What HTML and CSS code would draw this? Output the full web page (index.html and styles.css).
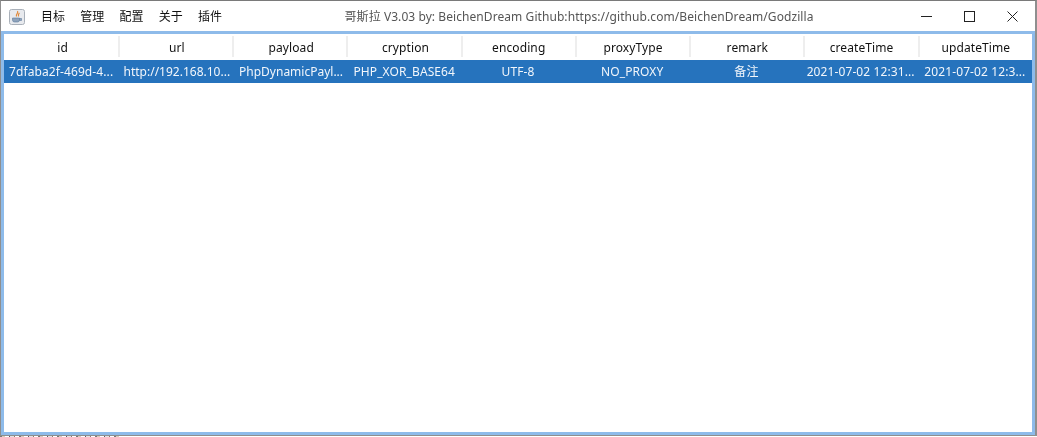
FILE: index.html
```html
<!DOCTYPE html>
<html lang="zh">
<head>
<meta charset="utf-8">
<title>哥斯拉</title>
<link rel="stylesheet" href="styles.css">
</head>
<body>
<div class="window">
  <header class="titlebar">
    <svg class="appicon" width="16" height="16" viewBox="0 0 16 16">
      <rect x="0.5" y="0.5" width="15" height="15" rx="2" fill="#e8eaee" stroke="#a9b0b9"/>
      <path d="M8.5 2C10 4 6.5 5 7.5 7.5M10.5 4C9 5 9.5 6 9.5 7.5" fill="none" stroke="#e08a3c" stroke-width="1.2"/>
      <path d="M3.5 9h7v2a2 2 0 0 1-2 2h-3a2 2 0 0 1-2-2zM10.5 9.5h2v2h-2" fill="#8fa3bb" stroke="#5d7a9c" stroke-width=".6"/>
    </svg>
    <nav class="menu">
      <span>目标</span><span>管理</span><span>配置</span><span>关于</span><span>插件</span>
    </nav>
    <div class="title">哥斯拉 V3.03 by: BeichenDream Github:https://github.com/BeichenDream/Godzilla</div>
    <div class="controls">
      <svg width="11" height="11" viewBox="0 0 11 11"><path d="M0 5.5h11" stroke="#222" fill="none"/></svg>
      <svg width="11" height="11" viewBox="0 0 11 11"><rect x=".5" y=".5" width="10" height="10" stroke="#222" fill="none"/></svg>
      <svg width="11" height="11" viewBox="0 0 11 11"><path d="M.5.5l10 10M10.5.5l-10 10" stroke="#222" fill="none"/></svg>
    </div>
  </header>
  <main class="panel">
    <div class="row head">
      <div>id</div><div>url</div><div>payload</div><div>cryption</div><div>encoding</div><div>proxyType</div><div>remark</div><div>createTime</div><div>updateTime</div>
    </div>
    <div class="row selected">
      <div>7dfaba2f-469d-4...</div><div>http://192.168.10...</div><div>PhpDynamicPayl...</div><div>PHP_XOR_BASE64</div><div>UTF-8</div><div>NO_PROXY</div><div>备注</div><div>2021-07-02 12:31...</div><div>2021-07-02 12:3...</div>
    </div>
  </main>
</div>
<div class="residue"></div>
</body>
</html>
```
FILE: styles.css
```css
* { box-sizing: border-box; }
html, body { margin: 0; height: 100%; overflow: hidden; background: #fff; }
body { font: 12px/16px "Noto Sans", "Noto Sans CJK SC", sans-serif; color: #1c1c1c; }
.window {
  width: 1037px; height: 436px;
  display: flex; flex-direction: column;
  border-top: 1px solid #7a7a7a;
  border-left: 1px solid #8f8f8f;
  border-right: 2px solid #8f8f8f;
  border-bottom: 1px solid #8f8f8f;
  filter: blur(.3px);
}
.titlebar { height: 30px; flex: none; display: flex; align-items: center; padding: 1px 0 0 8px; }
.appicon { flex: none; }
.menu { display: flex; gap: 15.25px; margin-left: 16px; width: 290px; color: #111; }
.title { width: 480px; text-align: center; color: #555; margin-left: 8px; white-space: nowrap; letter-spacing: .07px; }
.controls { margin-left: auto; display: flex; gap: 32px; padding-right: 17px; }
.panel {
  flex: 1; border: 3px solid #8ebbea;
  background: #fff; padding-top: 1px;
}
.row { display: grid; grid-template-columns: repeat(9, 1fr); text-align: center; white-space: nowrap; letter-spacing: .1px; }
.row > div { overflow: hidden; }
.head { height: 25px; color: #111; margin-left: -.5px; }
.head > div { border-left: 2px solid #eeeeee; margin: 1px 0 3px; line-height: 23px; }
.head > div:first-child { border-left-color: transparent; padding-left: 2px; }
.head > div:nth-child(2), .head > div:nth-child(3), .head > div:nth-child(4) { padding-left: 2px; }
.selected { height: 23px; line-height: 23px; background: #2673bd; color: #f2f6fb; }
.selected > div:nth-child(2) { padding-left: 3px; letter-spacing: 0; }
.selected > div:nth-child(3) { padding-left: 3px; letter-spacing: 0; }
.selected > div:nth-child(4) { padding-left: 1px; }
.residue {
  width: 120px; height: 1px;
  background: repeating-linear-gradient(90deg, #777 0 2px, #d8ccbc 2px 5px, #fff 5px 9px, #5a5a6a 9px 10px, #e4e4e4 10px 14px, #8a7a70 14px 15px, #fff 15px 19px);
}
```
